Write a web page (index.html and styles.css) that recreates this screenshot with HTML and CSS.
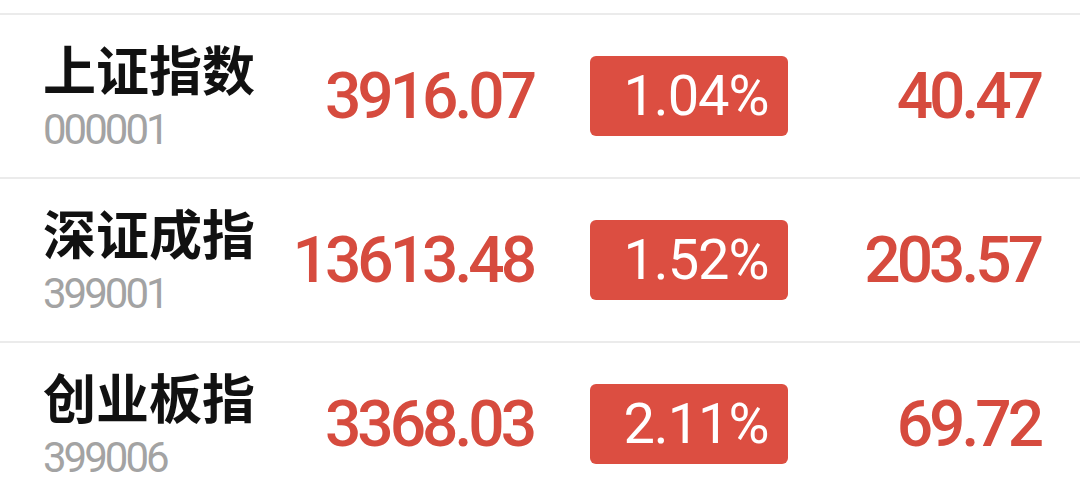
FILE: index.html
```html
<!DOCTYPE html>
<html>
<head>
    <meta charset="UTF-8">
    <meta name="viewport" content="width=device-width, initial-scale=1.0">
    <title>指数行情</title>
    <link rel="stylesheet" href="styles.css">
</head>
<body>
<!-- Index quote list -->
<div class="quote-list">
    <div class="quote-row">
        <div class="quote-name">
            <div class="name">上证指数</div>
            <div class="code">000001</div>
        </div>
        <div class="price">3916.07</div>
        <div class="badge">1.04%</div>
        <div class="change">40.47</div>
    </div>

    <div class="quote-row">
        <div class="quote-name">
            <div class="name">深证成指</div>
            <div class="code">399001</div>
        </div>
        <div class="price">13613.48</div>
        <div class="badge">1.52%</div>
        <div class="change">203.57</div>
    </div>

    <div class="quote-row">
        <div class="quote-name">
            <div class="name">创业板指</div>
            <div class="code">399006</div>
        </div>
        <div class="price">3368.03</div>
        <div class="badge">2.11%</div>
        <div class="change">69.72</div>
    </div>
</div>
</body>
</html>
```

FILE: styles.css
```css
/* Page base */
html, body {
    margin: 0;
    height: 100%;
    overflow: hidden;
    background: #ffffff;
}

.quote-list {
    padding-top: 13px;
}

/* One index per row: name | price | badge | change */
.quote-row {
    display: grid;
    grid-template-columns: 247px 243px 198px 252px;
    column-gap: 0;
    align-items: center;
    height: 162px;
    padding: 0 40px 0 43px;
    border-top: 2px solid #ebebeb;
}

/* Name + code column */
.name {
    font-family: "Noto Sans CJK SC", "Noto Sans", sans-serif;
    font-weight: 700;
    font-size: 53px;
    line-height: 62px;
    color: #111111;
}

.code {
    margin-top: 5px;
    font-family: Roboto, "Noto Sans", sans-serif;
    font-size: 42px;
    line-height: 52px;
    letter-spacing: -3px;
    color: #a3a3a3;
}

/* Numbers */
.price,
.change {
    font-family: Roboto, "Noto Sans", sans-serif;
    font-weight: 500;
    font-size: 64px;
    letter-spacing: -4px;
    color: #d64b3e;
    text-align: right;
}

.price {
    margin-right: 57px; /* space before the badge */
}

.quote-row {
    grid-template-columns: 247px 300px 198px 252px;
}

.badge {
    box-sizing: border-box;
    width: 198px;
    height: 80px;
    padding-left: 14px; /* text sits a bit right of centre */
    line-height: 80px;
    border-radius: 6px;
    background-color: #dc4e41;
    color: #ffffff;
    font-family: Roboto, "Noto Sans", sans-serif;
    font-size: 56px;
    letter-spacing: -1px;
    text-align: center;
}
```
